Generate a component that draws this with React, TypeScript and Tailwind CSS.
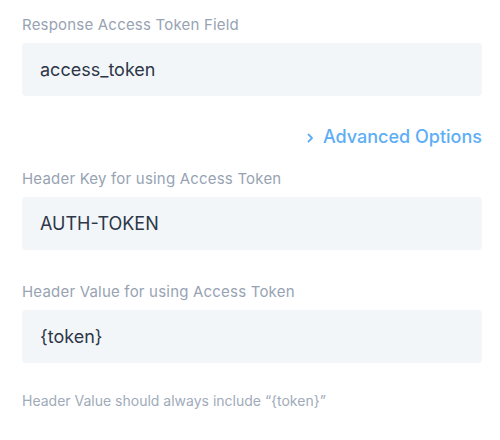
import React from "react";

function Field({ label, value }: { label: string; value: string }) {
  return (
    <div className="flex flex-col">
      <div className="text-[15px] leading-[18px] tracking-[0.2px] text-[#97a3b3] h-[18px]">{label}</div>
      <div className="mt-[9px] h-[53px] rounded-[4px] bg-[#f3f6f9] flex items-center pl-[18px] text-[18px] text-[#2d3748]">
        {value}
      </div>
    </div>
  );
}

export default function App() {
  return (
    <div
      className="w-[500px] h-[440px] bg-white pl-[22px] pr-[18px] pt-[16px]"
      style={{ fontFamily: "Inter, 'Noto Sans', sans-serif" }}
    >
      <Field label="Response Access Token Field" value="access_token" />
      <div className="mt-[30px] flex justify-end items-center text-[18px] font-medium text-[#5eaef5] leading-[22px] h-[22px]">
        <svg width="7" height="10" viewBox="0 0 7 10" className="mr-[9px] mt-[1px]">
          <path d="M1.5 1.5 L5 5 L1.5 8.5" fill="none" stroke="#5eaef5" strokeWidth="1.8" strokeLinecap="round" strokeLinejoin="round" />
        </svg>
        <span>Advanced Options</span>
      </div>
      <div className="mt-[22px]">
        <Field label="Header Key for using Access Token" value="AUTH-TOKEN" />
      </div>
      <div className="mt-[33px]">
        <Field label="Header Value for using Access Token" value="{token}" />
      </div>
      <div className="mt-[28px] text-[14px] leading-[20px] text-[#a0abba]">Header Value should always include “{"{"}token{"}"}”</div>
    </div>
  );
}
